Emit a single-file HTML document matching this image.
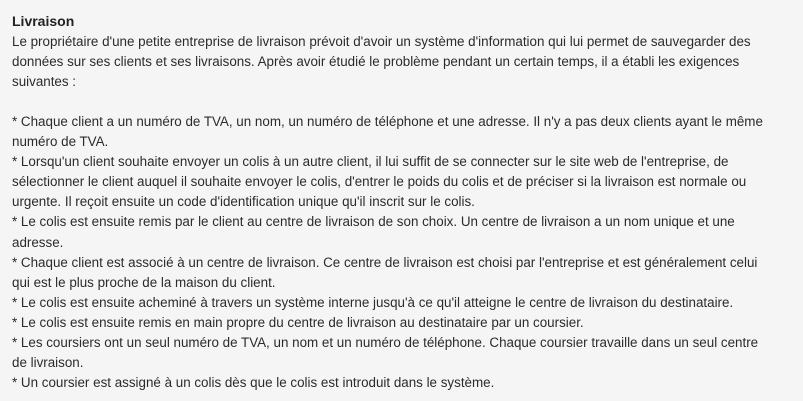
<!DOCTYPE html>
<html><head><meta charset="utf-8"><style>
html,body{margin:0;padding:0;width:803px;height:401px;overflow:hidden;background:#f5f5f5}
.c{position:absolute;left:12px;top:11px;font-family:"Liberation Sans",sans-serif;font-size:13.4px;line-height:20.05px;color:#2b2b2b;white-space:nowrap}
b{font-weight:bold;color:#222;font-size:14px}
</style></head><body><div class="c">
<b>Livraison</b><br>
Le propriétaire d'une petite entreprise de livraison prévoit d'avoir un système d'information qui lui permet de sauvegarder des<br>
données sur ses clients et ses livraisons. Après avoir étudié le problème pendant un certain temps, il a établi les exigences<br>
suivantes :<br>
<br>
* Chaque client a un numéro de TVA, un nom, un numéro de téléphone et une adresse. Il n'y a pas deux clients ayant le même<br>
numéro de TVA.<br>
* Lorsqu'un client souhaite envoyer un colis à un autre client, il lui suffit de se connecter sur le site web de l'entreprise, de<br>
sélectionner le client auquel il souhaite envoyer le colis, d'entrer le poids du colis et de préciser si la livraison est normale ou<br>
urgente. Il reçoit ensuite un code d'identification unique qu'il inscrit sur le colis.<br>
* Le colis est ensuite remis par le client au centre de livraison de son choix. Un centre de livraison a un nom unique et une<br>
adresse.<br>
* Chaque client est associé à un centre de livraison. Ce centre de livraison est choisi par l'entreprise et est généralement celui<br>
qui est le plus proche de la maison du client.<br>
* Le colis est ensuite acheminé à travers un système interne jusqu'à ce qu'il atteigne le centre de livraison du destinataire.<br>
* Le colis est ensuite remis en main propre du centre de livraison au destinataire par un coursier.<br>
* Les coursiers ont un seul numéro de TVA, un nom et un numéro de téléphone. Chaque coursier travaille dans un seul centre<br>
de livraison.<br>
* Un coursier est assigné à un colis dès que le colis est introduit dans le système.
</div></body></html>
